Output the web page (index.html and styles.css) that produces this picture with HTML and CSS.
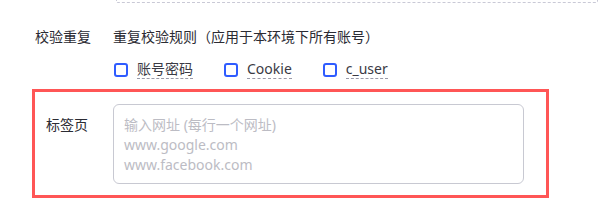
FILE: index.html
```html
<!DOCTYPE html>
<html lang="zh-CN">
<head>
  <meta charset="UTF-8">
  <meta name="viewport" content="width=device-width, initial-scale=1.0">
  <title>环境设置</title>
  <link rel="stylesheet" href="styles.css">
</head>
<body>
  <div class="prev-field"></div>

  <div class="form-row">
    <label class="form-label">校验重复</label>
    <div class="form-field">
      <div class="rule-title">重复校验规则（应用于本环境下所有账号）</div>
      <div class="check-group">
        <label class="check-item">
          <input type="checkbox">
          <span class="check-text">账号密码</span>
        </label>
        <label class="check-item">
          <input type="checkbox">
          <span class="check-text">Cookie</span>
        </label>
        <label class="check-item">
          <input type="checkbox">
          <span class="check-text">c_user</span>
        </label>
      </div>
    </div>
  </div>

  <div class="form-row highlight-row">
    <label class="form-label">标签页</label>
    <textarea class="url-input" placeholder="输入网址 (每行一个网址)&#10;www.google.com&#10;www.facebook.com"></textarea>
  </div>
</body>
</html>
```

FILE: styles.css
```css
/* form styles */

body {
  margin: 0;
  padding: 0;
  font-family: "Noto Sans", "Noto Sans CJK SC", sans-serif;
  font-size: 14px;
  color: #2b2b33;
  background-color: #fff;
}

.prev-field {
  margin-left: 116px;
  width: 480px;
  height: 2px;
  border: 1px dashed #c9c9d6;
  border-top: none;
  border-radius: 0 0 2px 2px;
}

.form-row {
  display: flex;
  align-items: flex-start;
  margin-top: 23px;
}

.form-label {
  width: 91px;
  text-align: right;
  line-height: 22px;
  flex-shrink: 0;
}

.form-field {
  margin-left: 22px;
}

.rule-title {
  line-height: 22px;
}

.check-group {
  display: flex;
  margin-top: 12px;
}

.check-item {
  display: flex;
  align-items: center;
  margin-right: 30px;
  line-height: 22px;
  color: #3a3a44;
  cursor: pointer;
}

.check-item input {
  appearance: none;
  -webkit-appearance: none;
  width: 14px;
  height: 14px;
  margin: 0 9px 0 1px;
  border: 2px solid #2f5cff;
  border-radius: 3px;
  box-sizing: border-box;
}

.check-text {
  line-height: 18px;
  border-bottom: 1px dashed #9a9aa8;
}

/* highlighted row */

.highlight-row {
  margin-top: 10px;
  margin-left: 32px;
  width: 511px;
  border: 3px solid #ff5656;
  padding: 12px 0 11px;
}

.highlight-row .form-label {
  width: 53px;
  margin-top: 10px;
}

.url-input {
  margin-left: 25px;
  width: 411px;
  height: 80px;
  box-sizing: border-box;
  padding: 10px 10px 8px;
  border: 1px solid #c8c9d2;
  border-radius: 6px;
  font-family: "Noto Sans", "Noto Sans CJK SC", sans-serif;
  font-size: 14px;
  line-height: 20px;
  resize: none;
  outline: none;
}

.url-input::placeholder {
  color: #bcbcc4;
}
```
